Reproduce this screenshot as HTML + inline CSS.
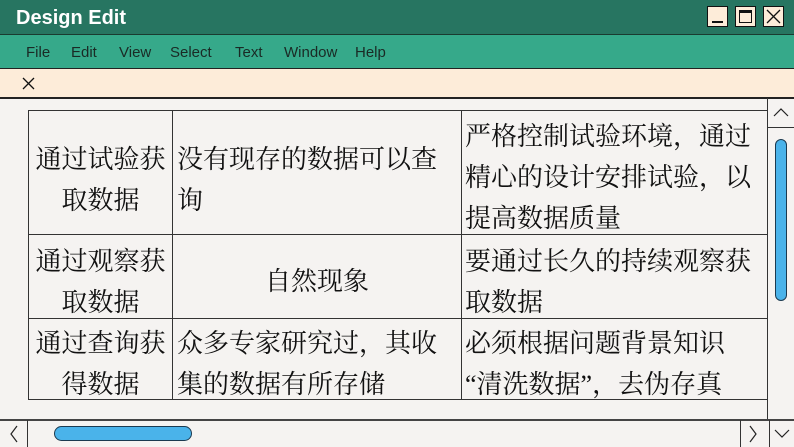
<!DOCTYPE html>
<html><head><meta charset="utf-8"><style>
*{margin:0;padding:0;box-sizing:border-box}
body{width:794px;height:447px;overflow:hidden;background:#f5f3f1;position:relative;font-family:"Liberation Sans",sans-serif}
.abs{position:absolute}
#title{left:0;top:0;width:794px;height:35px;background:#277561;border-bottom:1px solid #1b3a30}
#title span{position:absolute;left:16px;top:7px;color:#fff;font-weight:bold;font-size:20px}
.wb{position:absolute;top:6px;width:21px;height:21px;background:#fdecd9;border:1px solid #111}
#menu{left:0;top:35px;width:794px;height:34px;background:#36a98a;border-bottom:1px solid #222}
#menu span{position:absolute;top:9px;font-size:15px;color:#1a2a25}
#tool{left:0;top:69px;width:794px;height:30px;background:#fdecd9;border-bottom:2px solid #222}
.cell{position:absolute;font-family:"Liberation Serif","Noto Serif CJK SC",serif;font-size:26px;line-height:41px;color:#111;white-space:nowrap}
.hl{position:absolute;height:1px;background:#333}
.vl{position:absolute;width:1px;background:#333}
</style></head><body>
<div id="title" class="abs"><span>Design Edit</span>
<div class="wb" style="left:707px"><div style="position:absolute;left:4px;right:4px;bottom:3px;height:2px;background:#111"></div></div>
<div class="wb" style="left:735px"><div style="position:absolute;left:3px;right:3px;top:3px;bottom:3px;border:1px solid #111;border-top-width:3px"></div></div>
<div class="wb" style="left:763px"><svg width="19" height="19" style="position:absolute;left:0;top:0"><path d="M3 3L16 16M16 3L3 16" stroke="#111" stroke-width="1.3"/></svg></div>
</div>
<div id="menu" class="abs">
<span style="left:26px">File</span><span style="left:71px">Edit</span><span style="left:119px">View</span><span style="left:170px">Select</span><span style="left:235px">Text</span><span style="left:284px">Window</span><span style="left:355px">Help</span>
</div>
<div id="tool" class="abs"><svg width="16" height="16" style="position:absolute;left:21px;top:7px"><path d="M2 2L13 13M13 2L2 13" stroke="#111" stroke-width="1.3"/></svg></div>

<div class="hl" style="left:28px;top:110px;width:740px"></div>
<div class="hl" style="left:28px;top:234px;width:740px"></div>
<div class="hl" style="left:28px;top:318px;width:740px"></div>
<div class="hl" style="left:28px;top:399px;width:740px"></div>
<div class="vl" style="left:28px;top:110px;height:290px"></div>
<div class="vl" style="left:172px;top:110px;height:290px"></div>
<div class="vl" style="left:461px;top:110px;height:290px"></div>
<div class="vl" style="left:767px;top:98px;height:322px"></div>

<div class="cell" style="left:29px;top:139px;width:143px;text-align:center">通过试验获<br>取数据</div>
<div class="cell" style="left:177px;top:139px">没有现存的数据可以查<br>询</div>
<div class="cell" style="left:465px;top:116px">严格控制试验环境，通过<br>精心的设计安排试验，以<br>提高数据质量</div>
<div class="cell" style="left:29px;top:241px;width:143px;text-align:center">通过观察获<br>取数据</div>
<div class="cell" style="left:173px;top:261px;width:288px;text-align:center">自然现象</div>
<div class="cell" style="left:465px;top:241px">要通过长久的持续观察获<br>取数据</div>
<div class="cell" style="left:29px;top:323px;width:143px;text-align:center">通过查询获<br>得数据</div>
<div class="cell" style="left:177px;top:323px">众多专家研究过，其收<br>集的数据有所存储</div>
<div class="cell" style="left:465px;top:323px">必须根据问题背景知识<br>“清洗数据”，去伪存真</div>

<div class="hl" style="left:768px;top:127px;width:26px"></div>
<svg class="abs" style="left:770px;top:102px" width="22" height="20"><path d="M4 14L11 7L18 14" fill="none" stroke="#222" stroke-width="1.2"/></svg>
<div class="abs" style="left:775px;top:139px;width:12px;height:162px;background:#4ab3ea;border:1px solid #1b3a50;border-radius:6px"></div>

<div class="abs" style="left:0;top:419px;width:794px;height:2px;background:#444"></div>
<div class="vl" style="left:27px;top:420px;height:27px"></div>
<div class="vl" style="left:740px;top:420px;height:27px"></div>
<div class="vl" style="left:769px;top:420px;height:27px"></div>
<svg class="abs" style="left:6px;top:423px" width="16" height="22"><path d="M11 3L5 11L11 19" fill="none" stroke="#222" stroke-width="1.2"/></svg>
<svg class="abs" style="left:745px;top:423px" width="16" height="22"><path d="M5 3L11 11L5 19" fill="none" stroke="#222" stroke-width="1.2"/></svg>
<svg class="abs" style="left:772px;top:425px" width="20" height="18"><path d="M3 5L10 12L17 5" fill="none" stroke="#222" stroke-width="1.2"/></svg>
<div class="abs" style="left:54px;top:426px;width:138px;height:15px;background:#4ab3ea;border:1px solid #1b3a50;border-radius:8px"></div>
</body></html>
